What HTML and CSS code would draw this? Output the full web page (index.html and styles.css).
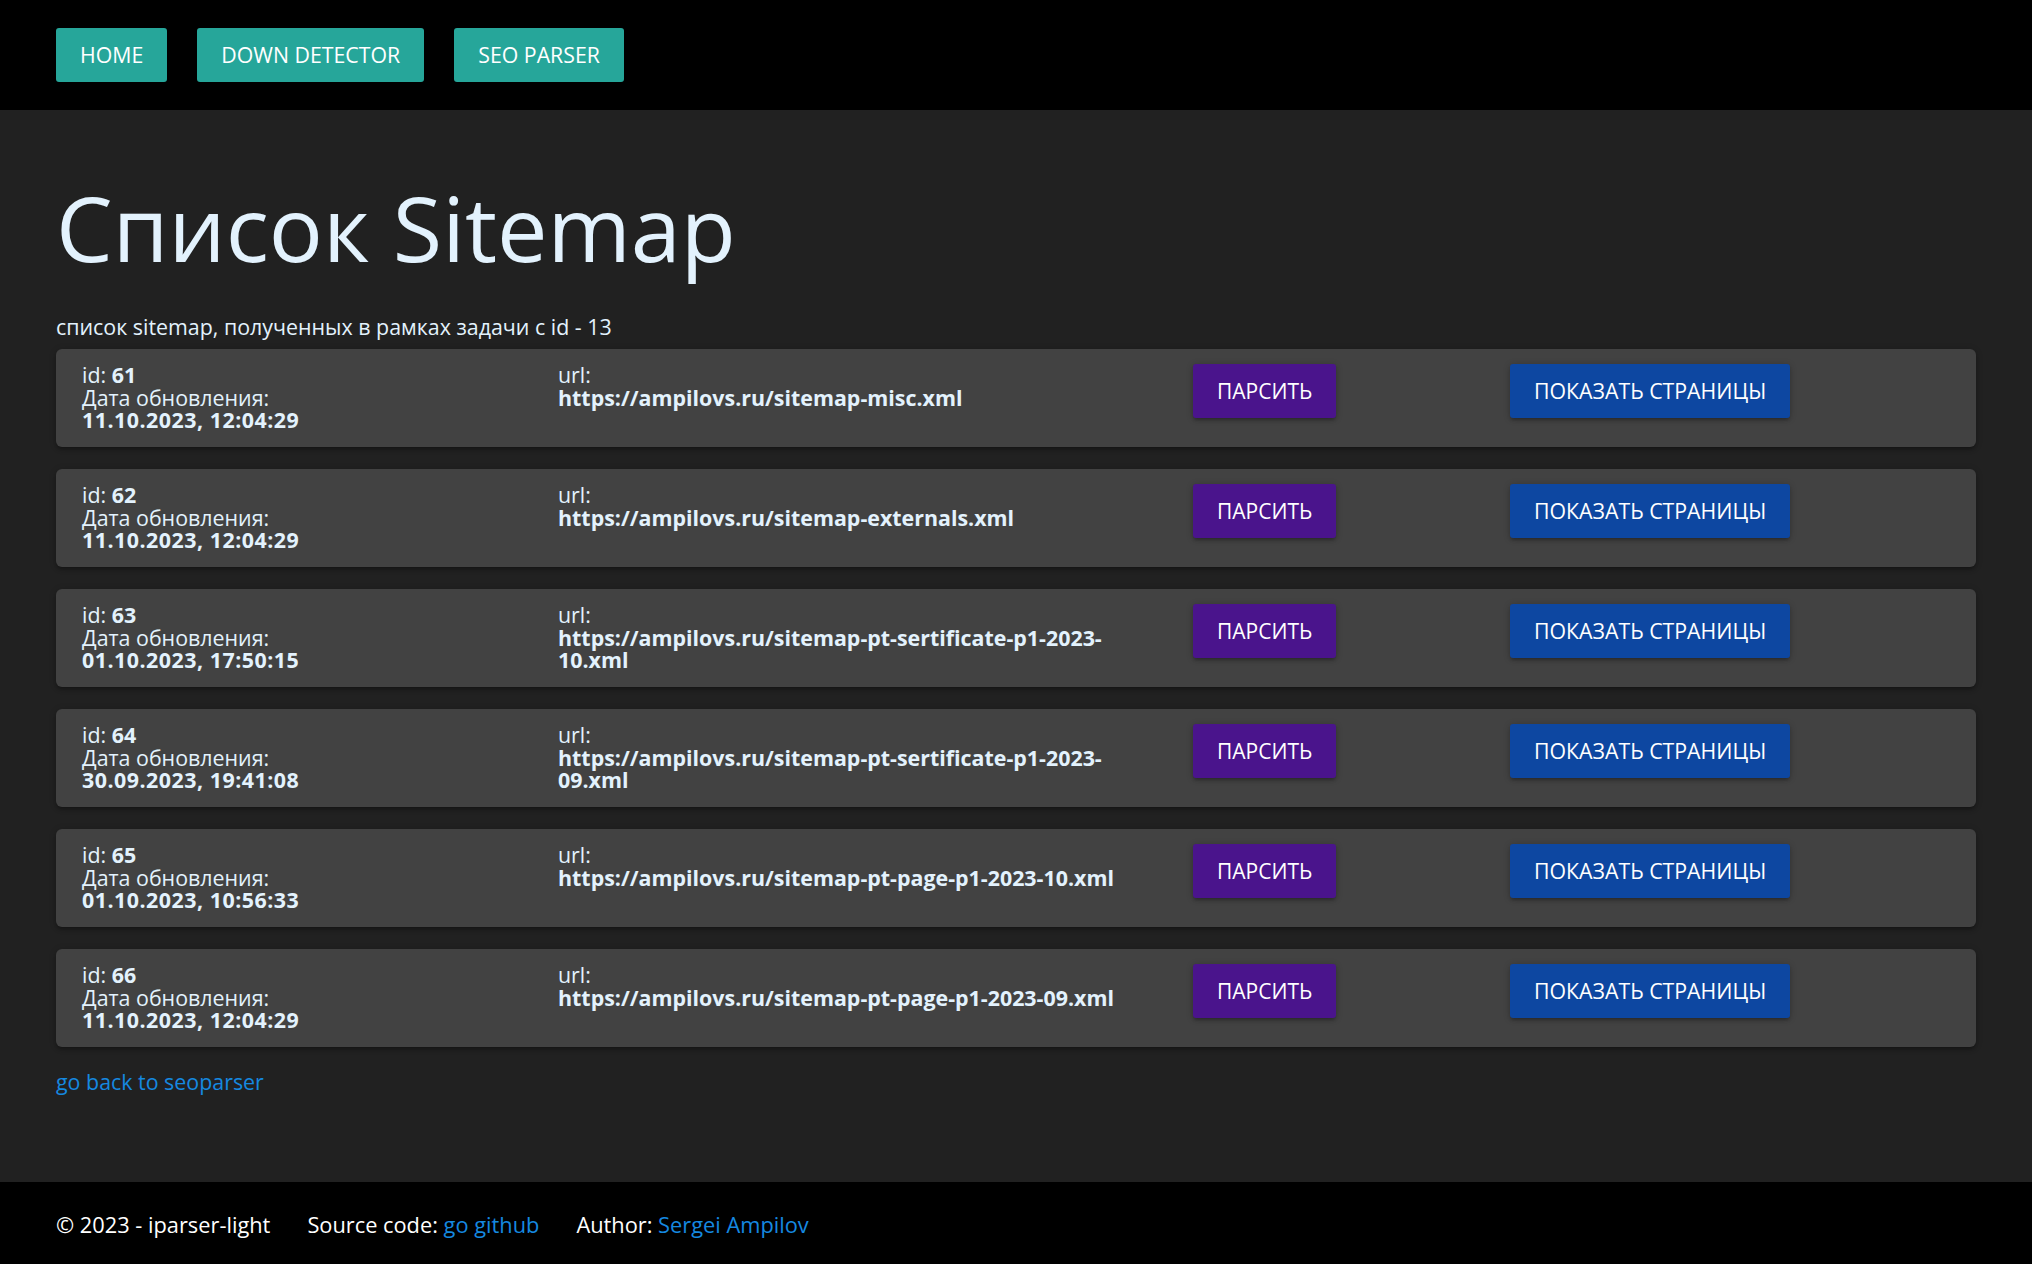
FILE: index.html
```html
<!DOCTYPE html>
<html lang="ru">
<head>
<meta charset="utf-8">
<title>Список Sitemap</title>
<link rel="stylesheet" href="styles.css">
</head>
<body>
<nav class="topnav">
  <a class="nav-btn" href="#">Home</a>
  <a class="nav-btn" href="#">Down detector</a>
  <a class="nav-btn" href="#">SEO parser</a>
</nav>
<main class="main">
  <h1 class="title">Список Sitemap</h1>
  <p class="subtitle">список sitemap, полученных в рамках задачи с id - 13</p>
  <ul class="list">
    <li class="card">
      <div class="info">id: <b>61</b><br>Дата обновления:<br><b class="date">11.10.2023, 12:04:29</b></div>
      <div class="url">url:<br><b>https://ampilovs.ru/sitemap-misc.xml</b></div>
      <div class="act"><button class="btn btn-parse">Парсить</button></div>
      <div class="act"><button class="btn btn-pages">Показать страницы</button></div>
    </li>
    <li class="card">
      <div class="info">id: <b>62</b><br>Дата обновления:<br><b class="date">11.10.2023, 12:04:29</b></div>
      <div class="url">url:<br><b>https://ampilovs.ru/sitemap-externals.xml</b></div>
      <div class="act"><button class="btn btn-parse">Парсить</button></div>
      <div class="act"><button class="btn btn-pages">Показать страницы</button></div>
    </li>
    <li class="card">
      <div class="info">id: <b>63</b><br>Дата обновления:<br><b class="date">01.10.2023, 17:50:15</b></div>
      <div class="url">url:<br><b>https://ampilovs.ru/sitemap-pt-sertificate-p1-2023-10.xml</b></div>
      <div class="act"><button class="btn btn-parse">Парсить</button></div>
      <div class="act"><button class="btn btn-pages">Показать страницы</button></div>
    </li>
    <li class="card">
      <div class="info">id: <b>64</b><br>Дата обновления:<br><b class="date">30.09.2023, 19:41:08</b></div>
      <div class="url">url:<br><b>https://ampilovs.ru/sitemap-pt-sertificate-p1-2023-09.xml</b></div>
      <div class="act"><button class="btn btn-parse">Парсить</button></div>
      <div class="act"><button class="btn btn-pages">Показать страницы</button></div>
    </li>
    <li class="card">
      <div class="info">id: <b>65</b><br>Дата обновления:<br><b class="date">01.10.2023, 10:56:33</b></div>
      <div class="url">url:<br><b>https://ampilovs.ru/sitemap-pt-page-p1-2023-10.xml</b></div>
      <div class="act"><button class="btn btn-parse">Парсить</button></div>
      <div class="act"><button class="btn btn-pages">Показать страницы</button></div>
    </li>
    <li class="card">
      <div class="info">id: <b>66</b><br>Дата обновления:<br><b class="date">11.10.2023, 12:04:29</b></div>
      <div class="url">url:<br><b>https://ampilovs.ru/sitemap-pt-page-p1-2023-09.xml</b></div>
      <div class="act"><button class="btn btn-parse">Парсить</button></div>
      <div class="act"><button class="btn btn-pages">Показать страницы</button></div>
    </li>
  </ul>
  <a class="back" href="#">go back to seoparser</a>
</main>
<footer class="footer">
  <span class="foot-item">© 2023 - iparser-light</span>
  <span class="foot-item">Source code: <a class="link" href="#">go github</a></span>
  <span class="foot-item">Author: <a class="link" href="#">Sergei Ampilov</a></span>
</footer>
</body>
</html>
```
FILE: styles.css
```css
html, body {
  margin: 0;
  padding: 0;
}
body {
  min-height: 100vh;
  display: flex;
  flex-direction: column;
  background: #212121;
  color: #e3f2fd;
  font-family: "Open Sans", "Noto Sans", sans-serif;
  font-size: 21.4px;
  line-height: 1.5;
}
.topnav {
  height: 110px;
  background: #000;
  display: flex;
  align-items: center;
  gap: 30px;
  padding: 0 56px;
  box-sizing: border-box;
}
.nav-btn {
  display: inline-block;
  height: 54px;
  line-height: 54px;
  padding: 0 24px;
  background: #26a69a;
  color: #fff;
  text-decoration: none;
  text-transform: uppercase;
  font-size: 21.3px;
  border-radius: 3px;
}
.main {
  flex: 1;
  padding: 0 56px;
}
.title {
  margin: 65px 0 31px;
  font-size: 90px;
  font-weight: 400;
  line-height: 104px;
  color: #e3f2fd;
}
.subtitle {
  margin: 0;
  line-height: 34px;
}
.list {
  list-style: none;
  margin: 5px 0 0;
  padding: 0;
  display: flex;
  flex-direction: column;
  gap: 22.5px;
}
.card {
  display: grid;
  grid-template-columns: 476px 635px 317px 1fr;
  align-items: start;
  padding: 15px 0 15px 26px;
  background: #424242;
  border-radius: 6px;
  line-height: 22.5px;
  box-shadow: 0 3px 3px 0 rgba(0,0,0,.14), 0 4px 2px -3px rgba(0,0,0,.12), 0 1px 7px 0 rgba(0,0,0,.2);
}
.date {
  letter-spacing: 0.5px;
}
.url {
  padding-right: 40px;
}
.btn {
  height: 54px;
  padding: 0 24px;
  border: none;
  border-radius: 3px;
  color: #fff;
  font-family: inherit;
  font-size: 21px;
  text-transform: uppercase;
  line-height: 54px;
  box-shadow: 0 3px 3px 0 rgba(0,0,0,.14), 0 4px 2px -3px rgba(0,0,0,.12), 0 1px 7px 0 rgba(0,0,0,.2);
  cursor: pointer;
}
.btn-parse {
  background: #4a148c;
}
.btn-pages {
  background: #0d47a1;
  font-size: 21.3px;
}
.back {
  display: inline-block;
  margin-top: 18px;
  line-height: 34px;
  color: #1589e0;
  text-decoration: none;
}
.footer {
  height: 82px;
  background: #000;
  display: flex;
  align-items: center;
  gap: 37px;
  padding: 4px 56px 0;
  box-sizing: border-box;
  color: #fff;
  font-size: 21.8px;
  line-height: 34px;
}
.link {
  color: #1589e0;
  text-decoration: none;
}
```
